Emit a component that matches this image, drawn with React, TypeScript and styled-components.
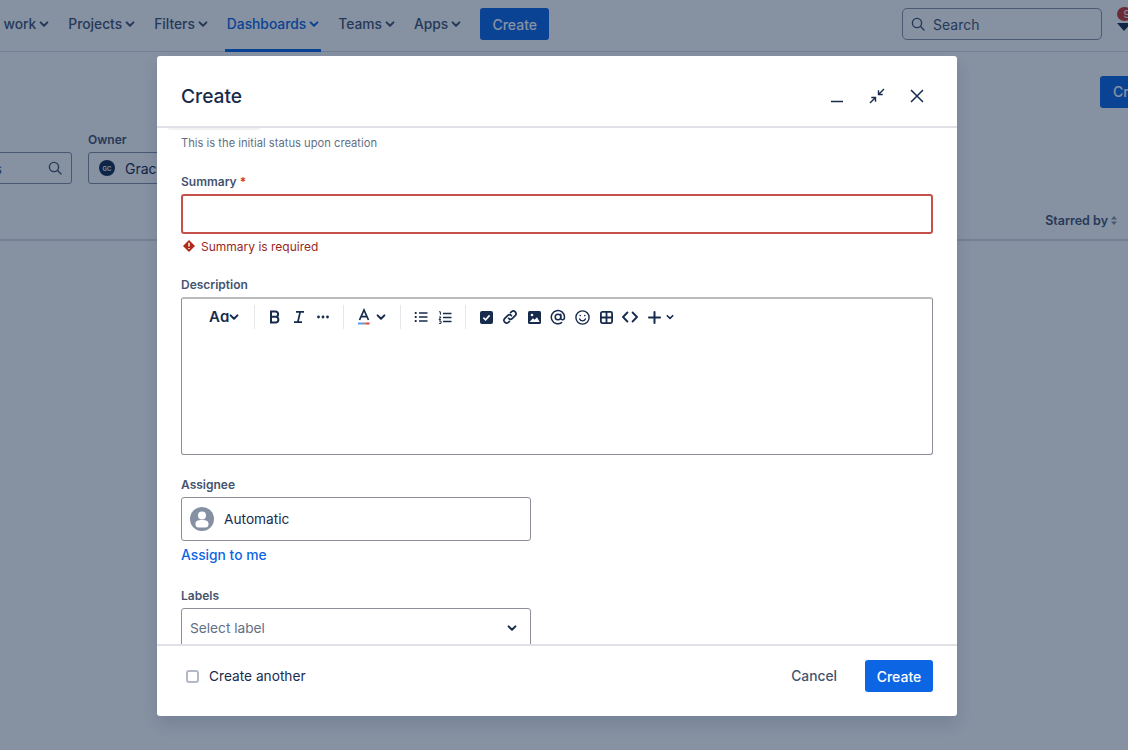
import React from "react";
import styled, { createGlobalStyle } from "styled-components";

const Global = createGlobalStyle`
  html, body { margin: 0; padding: 0; height: 100%; background: #fff; }
  * { box-sizing: border-box; }
  body { font-family: Inter, "Liberation Sans", sans-serif; color: #172b4d; }
`;

const Page = styled.div`
  position: relative; width: 1128px; height: 750px; overflow: hidden; background: #fff;
`;
const Nav = styled.header`
  height: 52px; border-bottom: 1px solid #dcdfe4; display: flex; align-items: flex-start; padding-left: 3.5px;
`;
const NavItem = styled.div<{ $active?: boolean }>`
  position: relative; height: 52px; padding-bottom: 4px; display: flex; align-items: center; gap: 3px; margin-right: 19px;
  font-size: 13.8px; font-weight: 500; color: ${(p) => (p.$active ? "#0c66e4" : "#44546f")};
  ${(p) => p.$active && `&::after { content: ""; position: absolute; left: -2px; right: -2px; bottom: 0; height: 3px; background: #0c66e4; }`}
`;
const NavCreate = styled.button`
  height: 32px; width: 69px; margin: 8px 0 0 0; border: 0; border-radius: 3px; background: #0c66e4; color: #fff;
  font: 500 14px Inter, sans-serif;
`;
const NavSpacer = styled.div` flex: 1; `;
const GlobalSearch = styled.div`
  width: 200px; height: 32px; margin: 8px 15px 0 0; border: 1.5px solid #8c95a6; border-radius: 5px; display: flex; align-items: center;
  gap: 8px; padding-left: 8px; font-size: 14px; color: #44546f;
`;
const Bell = styled.div`
  position: relative; width: 11px; height: 30px; margin-top: 8px; flex: none; color: #172b4d;
`;
const Badge = styled.span`
  position: absolute; left: 0; top: -1px; width: 15px; height: 14px; border-radius: 50%; background: #c9372c;
  color: #fff; font-size: 11px; line-height: 14px; text-align: center; padding-left: 5px;
`;
const BellIcon = styled.svg`
  position: absolute; left: 0; top: 12px;
`;
const TitleRow = styled.div`
  display: flex; justify-content: flex-end; padding-top: 24px; height: 76px; margin-right: -30px;
`;
const PageCreate = styled.div`
  width: 58px; height: 32px; border-radius: 3px; background: #0c66e4; color: #fff; font-size: 14px;
  font-weight: 500; line-height: 32px; padding-left: 13px;
`;
const FilterRow = styled.div`
  display: flex; align-items: flex-end; gap: 16px; margin-left: -130px; margin-top: 12px; height: 44px;
`;
const FilterField = styled.div`
  width: 202px; height: 32px; border: 1px solid #8590a2; border-radius: 3px; display: flex; align-items: center;
  justify-content: flex-end; padding-right: 9px; color: #44546f; font-size: 14px;
`;
const ClippedText = styled.span` margin-right: 46px; `;
const OwnerGroup = styled.div` display: flex; flex-direction: column; gap: 5px; `;
const OwnerLabel = styled.div` font-size: 12px; font-weight: 600; color: #44546f; line-height: 15px; `;
const OwnerSelect = styled.div`
  width: 200px; height: 32px; border: 1px solid #8590a2; border-radius: 3px; display: flex; align-items: center;
  gap: 10px; padding-left: 10px; font-size: 14px; color: #172b4d;
`;
const OwnerAvatar = styled.span`
  width: 16px; height: 16px; border-radius: 50%; background: #172b4d; color: #fff; font-size: 6px; font-weight: 600;
  display: flex; align-items: center; justify-content: center;
`;
const TableHead = styled.div`
  height: 57px; border-bottom: 2px solid #dcdfe4; display: flex; align-items: flex-end;
  justify-content: flex-end; padding: 0 11px 11px 0; font-size: 12.5px; font-weight: 600; color: #44546f; gap: 3px;
`;
const SortIcon = styled.svg` margin-bottom: 3px; `;
const Backdrop = styled.div`
  position: absolute; inset: 0; background: rgba(9, 30, 66, 0.49); padding: 56px 0 0 157px;
`;
const Dialog = styled.div`
  width: 800px; height: 660px; background: #fff; border-radius: 3px; display: flex; flex-direction: column;
  box-shadow: 0 8px 16px rgba(9, 30, 66, 0.12);
`;
const DialogHeader = styled.div`
  flex: none; height: 72px; padding: 10px 28px 0 24px; border-bottom: 2px solid #dfe1e6; display: flex; align-items: center;
  justify-content: space-between;
`;
const DialogTitle = styled.h1`
  margin: 0; font-size: 19.2px; font-weight: 500; color: #172b4d;
`;
const HeaderActions = styled.div` display: flex; gap: 16px; align-items: center; `;
const HeaderIcon = styled.svg` display: block; color: #172b4d; `;
const DialogBody = styled.div`
  flex: 1; min-height: 0; overflow: hidden; padding: 0 24px;
`;
const StatusEdge = styled.div`
  width: 92px; height: 2px; margin: 0 0 5px -13px; background: #f1f2f4; border-radius: 0 0 3px 3px;
`;
const Hint = styled.div`
  font-size: 11.2px; line-height: 16px; color: #626f86; margin-bottom: 23px;
`;
const Label = styled.div`
  font-size: 12px; font-weight: 600; line-height: 16px; color: #44546f; margin-bottom: 4px;
`;
const Req = styled.span` color: #c9372c; margin-left: 3px; `;
const SummaryInput = styled.div`
  height: 40px; border: 2px solid #c4524a; border-radius: 3px;
`;
const ErrorRow = styled.div`
  display: flex; align-items: center; gap: 6px; margin: 4px 0 23px 2px; height: 16px; font-size: 12px; color: #97291c;
`;
const Editor = styled.div`
  height: 158px; border: 1px solid #8c8f97; border-top-width: 2px; border-top-color: #bbb; border-radius: 3px; margin-bottom: 22px;
`;
const Toolbar = styled.div`
  display: flex; align-items: center; height: 36px; padding-left: 27px;
`;
const Tool = styled.span<{ $w?: number }>`
  width: ${(p) => p.$w ?? 24}px; height: 24px; display: flex; align-items: center; justify-content: center; flex: none; color: #172b4d;
`;
const ToolSep = styled.span<{ $l: number; $r: number }>`
  width: 1px; height: 24px; background: #e4e6ea; margin: 0 ${(p) => p.$r}px 0 ${(p) => p.$l}px; flex: none;
`;
const AaText = styled.span`
  font-size: 15px; font-weight: 600; color: #172b4d; line-height: 24px; width: 20px;
`;
const ComboBox = styled.div<{ $tall?: boolean }>`
  width: 350px; height: ${(p) => (p.$tall ? 44 : 40)}px; border: 1px solid #8c8f97; border-radius: 3px; display: flex; align-items: center;
  padding: 0 13px 0 8px; gap: 10px; font-size: 13.7px; color: #172b4d; flex: none;
`;
const Link = styled.a`
  display: block; margin: 6px 0 25px; font-size: 13.8px; font-weight: 500; line-height: 16px; color: #0c66e4; text-decoration: none;
`;
const Placeholder = styled.span` flex: 1; color: #626f86; `;
const DialogFooter = styled.div`
  flex: none; height: 72px; border-top: 2px solid #dfe1e6; display: flex; align-items: center; padding: 0 24px 10px 29px;
`;
const Check = styled.span`
  width: 13px; height: 13px; border: 2px solid #b3b9c4; border-radius: 3px; margin-right: 10px; flex: none;
`;
const CheckLabel = styled.span` flex: 1; font-size: 13.7px; color: #172b4d; `;
const CancelButton = styled.button`
  border: 0; background: none; font: 500 13.8px Inter, sans-serif; color: #44546f; padding: 0; margin-right: 28px;
`;
const PrimaryButton = styled.button`
  width: 68px; height: 32px; border: 0; border-radius: 3px; background: #0c66e4; color: #fff; font: 500 14px Inter, sans-serif;
`;

const Chevron = ({ color = "currentColor", size = 10 }: { color?: string; size?: number }) => (
  <svg width={size} height={size} viewBox="0 0 10 10" fill="none">
    <path d="M1.6 3.4 5 6.8l3.4-3.4" stroke={color} strokeWidth="2" strokeLinecap="round" strokeLinejoin="round" />
  </svg>
);
const SearchIcon = ({ size = 14 }: { size?: number }) => (
  <svg width={size} height={size} viewBox="0 0 14 14" fill="none" stroke="currentColor" strokeWidth="1.4" strokeLinecap="round">
    <circle cx="6" cy="6" r="4.6" /><path d="m9.6 9.6 3.4 3.4" />
  </svg>
);

const navItems = ["work", "Projects", "Filters", "Dashboards", "Teams", "Apps"];

export default function App() {
  return (
    <Page>
      <Global />
      <Nav>
        {navItems.map((n) => (
          <NavItem key={n} $active={n === "Dashboards"}>
            {n}
            <Chevron />
          </NavItem>
        ))}
        <NavCreate>Create</NavCreate>
        <NavSpacer />
        <GlobalSearch><SearchIcon />Search</GlobalSearch>
        <Bell>
          <BellIcon width="14" height="12" viewBox="0 0 14 12"><path d="M0 3h14L7 11z" fill="#172b4d" /></BellIcon>
          <Badge>9</Badge>
        </Bell>
      </Nav>
      <TitleRow><PageCreate>Create</PageCreate></TitleRow>
      <FilterRow>
        <FilterField><ClippedText>Search dashboards</ClippedText><SearchIcon /></FilterField>
        <OwnerGroup>
          <OwnerLabel>Owner</OwnerLabel>
          <OwnerSelect><OwnerAvatar>GC</OwnerAvatar>Grace</OwnerSelect>
        </OwnerGroup>
      </FilterRow>
      <TableHead>
        Starred by
        <SortIcon width="6" height="9" viewBox="0 0 6 9"><path d="M3 0 6 3.5H0zM3 9 0 5.5h6z" fill="#8590a2" /></SortIcon>
      </TableHead>
      <Backdrop>
        <Dialog>
          <DialogHeader>
            <DialogTitle>Create</DialogTitle>
            <HeaderActions>
              <HeaderIcon width="24" height="24" viewBox="0 0 24 24" fill="none" stroke="currentColor" strokeWidth="1.5">
                <path d="M6 17.500h12" />
              </HeaderIcon>
              <HeaderIcon width="24" height="24" viewBox="0 0 24 24" fill="none" stroke="currentColor" strokeWidth="1.4">
                <path d="M19 5l-5.500 5.500M13.500 6.300v4.200h4.200M5 19l5.500-5.500M6.300 13.500h4.200v4.200" />
              </HeaderIcon>
              <HeaderIcon width="24" height="24" viewBox="0 0 24 24" fill="none" stroke="currentColor" strokeWidth="1.5">
                <path d="m6 6 12 12M18 6 6 18" />
              </HeaderIcon>
            </HeaderActions>
          </DialogHeader>
          <DialogBody>
            <StatusEdge />
            <Hint>This is the initial status upon creation</Hint>
            <Label>Summary<Req>*</Req></Label>
            <SummaryInput />
            <ErrorRow>
              <svg width="12" height="12" viewBox="0 0 12 12">
                <path d="M6 0 12 6 6 12 0 6z" fill="#ae2a19" />
                <path d="M6 2.800v3.600M6 8v1" stroke="#fff" strokeWidth="1.5" />
              </svg>
              Summary is required
            </ErrorRow>
            <Label>Description</Label>
            <Editor>
              <Toolbar>
                <AaText>Aɑ</AaText>
                <Tool $w={10}><Chevron /></Tool>
                <ToolSep $l={15} $r={8} />
                <Tool>
                  <svg width="14" height="14" viewBox="0 0 14 14" fill="none" stroke="currentColor" strokeWidth="2">
                    <path d="M3 1.500h4.500a2.600 2.600 0 0 1 0 5.300H3zM3 6.800h5a2.900 2.900 0 0 1 0 5.700H3z" />
                  </svg>
                </Tool>
                <Tool>
                  <svg width="14" height="14" viewBox="0 0 14 14" fill="none" stroke="currentColor" strokeWidth="1.7">
                    <path d="M4 1.800h8M2 12.200h8M8.200 1.800 5.800 12.200" />
                  </svg>
                </Tool>
                <Tool>
                  <svg width="14" height="4" viewBox="0 0 14 4" fill="currentColor">
                    <circle cx="2.500" cy="2" r="1.400" /><circle cx="7" cy="2" r="1.400" /><circle cx="11.500" cy="2" r="1.400" />
                  </svg>
                </Tool>
                <ToolSep $l={8} $r={8} />
                <Tool>
                  <svg width="14" height="18" viewBox="0 0 14 18">
                    <path d="M2.500 12 7 2l4.500 10M4.200 8.600h5.600" fill="none" stroke="currentColor" strokeWidth="1.700" />
                    <rect x="1" y="14.500" width="4" height="2" fill="#579dff" />
                    <rect x="5" y="14.500" width="4" height="2" fill="#8590a2" />
                    <rect x="9" y="14.500" width="3.500" height="2" fill="#e2483d" />
                  </svg>
                </Tool>
                <Tool $w={10}><Chevron /></Tool>
                <ToolSep $l={14} $r={8} />
                <Tool>
                  <svg width="14" height="12" viewBox="0 0 14 12" fill="none" stroke="currentColor">
                    <path d="M5 2h8.500M5 6h8.500M5 10h8.500" strokeWidth="1.400" />
                    <path d="M.8 2h1.800M.8 6h1.800M.8 10h1.800" strokeWidth="1.800" />
                  </svg>
                </Tool>
                <Tool>
                  <svg width="14" height="13" viewBox="0 0 14 13" fill="none" stroke="currentColor">
                    <path d="M5 2.500h8.500M5 6.500h8.500M5 10.500h8.500" strokeWidth="1.400" />
                    <path d="M1 .8h1.400v3M1 6h2L1 8.600h2M1 10h2v2.400H1" strokeWidth="1" />
                  </svg>
                </Tool>
                <ToolSep $l={8} $r={8} />
                <Tool>
                  <svg width="13" height="13" viewBox="0 0 13 13">
                    <rect width="13" height="13" rx="2" fill="#172b4d" />
                    <path d="m3.400 6.600 2.200 2.200 4-4.400" fill="none" stroke="#fff" strokeWidth="1.600" />
                  </svg>
                </Tool>
                <Tool>
                  <svg width="16" height="16" viewBox="0 0 16 16" fill="none" stroke="currentColor" strokeWidth="1.700" strokeLinecap="round">
                    <path d="M6.600 9.400a2.700 2.700 0 0 0 3.800 0l3-3a2.700 2.700 0 0 0-3.800-3.800l-1 1" />
                    <path d="M9.400 6.600a2.700 2.700 0 0 0-3.800 0l-3 3a2.700 2.700 0 0 0 3.800 3.800l1-1" />
                  </svg>
                </Tool>
                <Tool>
                  <svg width="13" height="13" viewBox="0 0 13 13">
                    <rect width="13" height="13" rx="1.500" fill="#172b4d" />
                    <circle cx="4" cy="4" r="1.300" fill="#fff" />
                    <path d="M1.500 11 5 7.200l1.600 1.600L9 6.200l2.600 4.800z" fill="#fff" />
                  </svg>
                </Tool>
                <Tool>
                  <svg width="16" height="16" viewBox="0 0 16 16" fill="none" stroke="currentColor" strokeWidth="1.500" strokeLinecap="round">
                    <circle cx="8" cy="8" r="2.800" />
                    <path d="M10.800 5.200v4.100c0 2.200 3.700 2.200 3.700-1.300A6.600 6.600 0 1 0 11.600 13.600" />
                  </svg>
                </Tool>
                <Tool>
                  <svg width="15" height="15" viewBox="0 0 15 15" fill="none" stroke="currentColor" strokeWidth="1.400" strokeLinecap="round">
                    <circle cx="7.500" cy="7.500" r="6.600" />
                    <path d="M4.600 9a3.200 3.200 0 0 0 5.800 0" />
                    <circle cx="5.200" cy="5.600" r=".8" fill="currentColor" stroke="none" />
                    <circle cx="9.800" cy="5.600" r=".8" fill="currentColor" stroke="none" />
                  </svg>
                </Tool>
                <Tool>
                  <svg width="13" height="13" viewBox="0 0 13 13" fill="none" stroke="currentColor" strokeWidth="1.800">
                    <rect x=".9" y=".9" width="11.200" height="11.200" rx="1.500" />
                    <path d="M6.500 1v11M1 6.500h11" />
                  </svg>
                </Tool>
                <Tool>
                  <svg width="16" height="12" viewBox="0 0 16 12" fill="none" stroke="currentColor" strokeWidth="1.800" strokeLinecap="round" strokeLinejoin="round">
                    <path d="M5.400 1.500 1 6l4.400 4.500M10.600 1.500 15 6l-4.400 4.500" />
                  </svg>
                </Tool>
                <Tool>
                  <svg width="13" height="13" viewBox="0 0 13 13" fill="none" stroke="currentColor" strokeWidth="2" strokeLinecap="round">
                    <path d="M6.500 1v11M1 6.500h11" />
                  </svg>
                </Tool>
                <Tool $w={8}><Chevron /></Tool>
              </Toolbar>
            </Editor>
            <Label>Assignee</Label>
            <ComboBox $tall>
              <svg width="24" height="24" viewBox="0 0 24 24">
                <circle cx="12" cy="12" r="12" fill="#8590a2" />
                <circle cx="12" cy="8.500" r="4" fill="#fff" />
                <path d="M5.500 16.500c0-2.600 2.200-3.600 6.500-3.600s6.500 1 6.500 3.600V18A3 3 0 0 1 15.500 20.500h-7A3 3 0 0 1 5.500 18z" fill="#fff" />
              </svg>
              <span>Automatic</span>
            </ComboBox>
            <Link>Assign to me</Link>
            <Label>Labels</Label>
            <ComboBox>
              <Placeholder>Select label</Placeholder>
              <Chevron />
            </ComboBox>
          </DialogBody>
          <DialogFooter>
            <Check />
            <CheckLabel>Create another</CheckLabel>
            <CancelButton>Cancel</CancelButton>
            <PrimaryButton>Create</PrimaryButton>
          </DialogFooter>
        </Dialog>
      </Backdrop>
    </Page>
  );
}
